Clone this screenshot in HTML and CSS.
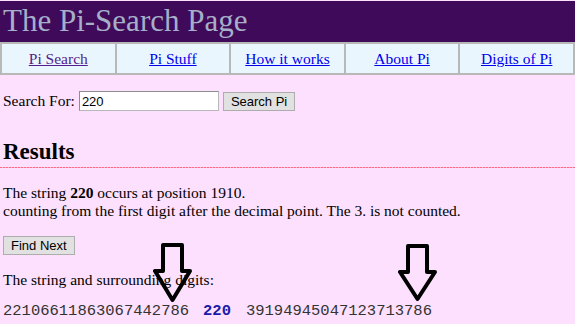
FILE: index.html
```html
<!DOCTYPE html>
<html>
  <head>
    <title>The Pi-Search Page</title>
    <link rel="stylesheet" href="styles.css">
  </head>
  <body>
    <div class="banner">The Pi-Search Page</div>

    <table class="nav">
      <tr>
        <td><a class="visited" href="#">Pi Search</a></td>
        <td><a href="#">Pi Stuff</a></td>
        <td><a href="#">How it works</a></td>
        <td><a href="#">About Pi</a></td>
        <td><a href="#">Digits of Pi</a></td>
      </tr>
    </table>

    <div class="content">
      <form class="search-form">
        Search For: <input class="search-box" type="text" value="220">
        <button type="button" class="btn">Search Pi</button>
      </form>

      <h2 class="results-title">Results</h2>

      <p class="found">The string <b>220</b> occurs at position 1910.<br>
      counting from the first digit after the decimal point. The 3. is not counted.</p>

      <button type="button" class="btn">Find Next</button>

      <p class="around">The string and surrounding digits:</p>
      <p class="digits">22106611863067442786<span class="hit">220</span>39194945047123713786</p>
    </div>

    <!-- the two big arrows drawn over the digits -->
    <svg class="arrow arrow-left" width="44" height="66" viewBox="0 0 44 66">
      <path d="M10 3 H29 V29 H37 L19.5 58 L2 29 H10 Z" fill="none" stroke="#000" stroke-width="4" stroke-linejoin="round"/>
    </svg>
    <svg class="arrow arrow-right" width="44" height="66" viewBox="0 0 44 66">
      <path d="M10 3 H29 V29 H37 L19.5 56 L2 29 H10 Z" fill="none" stroke="#000" stroke-width="4" stroke-linejoin="round"/>
    </svg>
  </body>
</html>
```

FILE: styles.css
```css
html{
  background-color: #fde0fd;
}
body{
  position: relative;
  margin: 0;
  padding-top: 1px;
  font-family: "Liberation Serif", "Times New Roman", serif;
  font-size: 15.5px;
  color: #000;
}
.banner{
  background-color: #400a5a;
  color: #a5b0c8;
  font-size: 31px;
  height: 41px;
  line-height: 40px;
  padding-left: 3px;
}
.nav{
  width: 100%;
  table-layout: fixed;
  border-collapse: separate;
  border-spacing: 0;
  border: 1px solid #b8b8b8;
  background-color: #eaf6fd;
}
.nav td{
  border: 1px solid #b8b8b8;
  text-align: center;
  height: 29px;
  padding: 0;
  font-size: 15.5px;
}
.nav a{
  color: #0000ee;
}
.nav a.visited{
  color: #551a8b;
}
.content{
  padding: 0 3px;
}
.search-form{
  margin: 16px 0 0 0;
  display: flex;
  align-items: center;
  gap: 4px;
}
.search-box{
  width: 134px;
  height: 16px;
  margin: 0;
  padding: 1px 2px;
  border-width: 1px;
  border-style: solid;
  border-color: #8e8e8e #b8b8b8 #b8b8b8 #8e8e8e;
  font-family: "Liberation Sans", Arial, sans-serif;
  font-size: 13px;
}
.btn{
  font-family: "Liberation Sans", Arial, sans-serif;
  font-size: 13px;
  background-color: #e1e1e1;
  border: 1px solid #adadad;
  color: #000;
  padding: 1px 7px;
  height: 19px;
  margin: 0;
}
/* dotted red rule under the heading */
.results-title{
  font-size: 23px;
  margin: 28px -3px 0 -3px;
  padding: 0 0 3px 3px;
  background-image: repeating-linear-gradient(90deg, #ff6a8a 0 2px, #ffb0c4 2px 3px);
  background-size: 100% 1px;
  background-position: left bottom;
  background-repeat: no-repeat;
}
.found{
  margin: 16px 0 16px 0;
}
.around{
  margin: 16px 0 13px 0;
}
.digits{
  margin: 0;
  font-family: "Liberation Mono", "Courier New", monospace;
  font-size: 15.5px;
  color: #333;
}
.hit{
  font-weight: bold;
  color: #1a1aa8;
  padding: 0 15px 0 14px;
}
.arrow{
  position: absolute;
}
.arrow-left{
  left: 153px;
  top: 242px;
}
.arrow-right{
  left: 398px;
  top: 243px;
}
```
